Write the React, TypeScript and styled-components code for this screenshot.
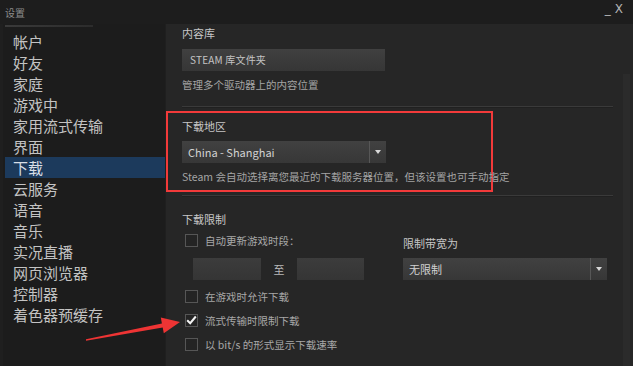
import React, { FC } from 'react';
import styled, { createGlobalStyle } from 'styled-components';

const GlobalStyle = createGlobalStyle`
  html, body {
    margin: 0;
    padding: 0;
    background: #1f1f1f;
  }

  body {
    font-family: "Noto Sans CJK SC", "Liberation Sans", sans-serif;
  }
`;

const Window = styled.div`
  position: relative;
  width: 633px;
  height: 366px;
  background-color: #1f1f1f;
  display: flex;
  flex-direction: column;
  overflow: hidden;
`;

const TitleBar = styled.div`
  height: 24px;
  flex-shrink: 0;
  display: flex;
  align-items: center;
  justify-content: space-between;
  padding: 0 10px 0 5px;
  background-color: #1d1d1d;
`;

const Title = styled.span`
  font-size: 10px;
  color: #8c8c8c;
`;

const WindowControls = styled.div`
  display: flex;
  align-items: flex-end;
  gap: 4px;
  color: #b4b4b4;
  font-family: "DejaVu Sans", sans-serif;
  font-size: 12px;
  line-height: 12px;
  margin-top: -6px;
`;

const Body = styled.div`
  flex: 1;
  display: flex;
  padding-left: 3px;
  min-height: 0;
`;

const Sidebar = styled.nav`
  position: relative;
  width: 162px;
  flex-shrink: 0;
  background-color: #1c1c1c;
  padding-top: 7px;
  margin-right: 1px;

  &::before {
    content: '';
    position: absolute;
    top: 1px;
    left: 2px;
    width: 88px;
    height: 2px;
    background: linear-gradient(to right, #3a3a3a, #2c2c2c);
  }
`;

interface NavItemProps {
  selected?: boolean;
}

const NavItem = styled.div<NavItemProps>`
  height: 21px;
  line-height: 21px;
  padding-left: 8px;
  margin-left: 2px;
  font-size: 15px;
  color: ${ props => props.selected ? '#d8dee6' : '#c3c3c3' };
  background-color: ${ props => props.selected ? '#1c3a5c' : 'transparent' };
  white-space: nowrap;
`;

const Content = styled.main`
  flex: 1;
  display: flex;
  background-color: #262626;
  min-width: 0;
`;

const Panel = styled.div`
  flex: 1;
  min-width: 0;
`;

const ScrollTrack = styled.div`
  width: 7px;
  flex-shrink: 0;
  margin: 50px 3px 0 0;
  background-color: #2b2b2b;
`;

interface SectionProps {
  highlighted?: boolean;
}

const Section = styled.section<SectionProps>`
  padding: ${ props => props.highlighted ? '4px 14px 5px 14px' : '0 16px' };
  width: ${ props => props.highlighted ? '327px' : 'auto' };
  box-sizing: border-box;
  border: ${ props => props.highlighted ? '2px solid #f23a3a' : 'none' };
`;

const Label = styled.div`
  font-size: 11px;
  line-height: 18px;
  color: #c6c6c6;
`;

const Help = styled.div`
  margin-top: 6px;
  font-size: 10.5px;
  line-height: 16px;
  color: #a4a4a4;
  white-space: nowrap;
`;

const LibraryButton = styled.div`
  margin-top: 7px;
  width: 203px;
  height: 22px;
  line-height: 22px;
  padding-left: 8px;
  box-sizing: border-box;
  font-size: 10px;
  letter-spacing: 0.2px;
  color: #c4c4c4;
  background: linear-gradient(to bottom, #404040, #363636);
`;

const Divider = styled.hr`
  margin: 13px 10px 0 16px;
  border: none;
  height: 1px;
  background-color: #3a3a3a;
  box-shadow: 0 1px 0 #202020;
`;

interface SelectProps {
  width: number;
}

const Select = styled.div<SelectProps>`
  margin-top: 6px;
  width: ${ props => props.width }px;
  height: 22px;
  display: flex;
  align-items: center;
  background: linear-gradient(to bottom, #414141, #373737);
  color: #d2d2d2;
  font-size: 11px;
`;

const SelectValue = styled.span`
  flex: 1;
  padding-left: 6px;
`;

const SelectArrow = styled.span`
  width: 17px;
  height: 100%;
  display: flex;
  align-items: center;
  justify-content: center;
  border-left: 1px solid #575757;
  box-sizing: border-box;

  &::after {
    content: '';
    border-left: 3.5px solid transparent;
    border-right: 3.5px solid transparent;
    border-top: 4px solid #d8d8d8;
  }
`;

const LimitSection = styled.section`
  padding: 14px 16px 0 16px;
`;

const LimitColumns = styled.div`
  display: flex;
  margin-top: 4px;
`;

const LeftColumn = styled.div`
  width: 226px;
`;

const RightColumn = styled.div`
  padding-top: 2px;
`;

const CheckRow = styled.label`
  display: flex;
  align-items: center;
  height: 16px;
  gap: 7px;
  padding-left: 3px;
  font-size: 10.5px;
  color: #a8a8a8;
  white-space: nowrap;

  & + & {
    margin-top: 8px;
  }
`;

const Box = styled.span`
  width: 13px;
  height: 13px;
  box-sizing: border-box;
  border: 1px solid #565656;
  background-color: #242424;
  display: flex;
  align-items: center;
  justify-content: center;
`;

const TimeRow = styled.div`
  display: flex;
  align-items: center;
  margin: 10px 0 0 11px;
`;

interface TimeInputProps {
  width: number;
}

const TimeInput = styled.div<TimeInputProps>`
  width: ${ props => props.width }px;
  height: 22px;
  background: linear-gradient(to bottom, #3c3c3c, #353535);
`;

const To = styled.span`
  width: 36px;
  text-align: center;
  font-size: 11px;
  color: #b8b8b8;
`;

const Checks = styled.div`
  margin-top: 8px;
`;

const Annotation = styled.svg`
  position: absolute;
  left: 0;
  top: 0;
  pointer-events: none;
`;

interface CheckboxProps {
  checked?: boolean;
  label: string;
}

const Checkbox: FC<CheckboxProps> = ({ checked, label }) => (
  <CheckRow>
    <Box>
      { checked && (
        <svg width='11' height='10' viewBox='0 0 11 10'>
          <path d='M1.2 5.2 L4.2 8.2 L9.8 1.5' fill='none' stroke='#f2f2f2' strokeWidth='2' />
        </svg>
      ) }
    </Box>
    { label }
  </CheckRow>
);

const navItems = [
  '帐户', '好友', '家庭', '游戏中', '家用流式传输', '界面', '下载',
  '云服务', '语音', '音乐', '实况直播', '网页浏览器', '控制器', '着色器预缓存',
];

const App: FC = () => (
  <>
    <GlobalStyle />
    <Window>
      <TitleBar>
        <Title>设置</Title>
        <WindowControls>
          <span>_</span>
          <span>X</span>
        </WindowControls>
      </TitleBar>
      <Body>
        <Sidebar>
          { navItems.map(item => (
            <NavItem key={ item } selected={ item === '下载' }>{ item }</NavItem>
          )) }
        </Sidebar>
        <Content>
          <Panel>
            <Section>
              <Label>内容库</Label>
              <LibraryButton>STEAM 库文件夹</LibraryButton>
              <Help>管理多个驱动器上的内容位置</Help>
            </Section>
            <Divider />
            <Section highlighted style={ { marginTop: 4 } }>
              <Label>下载地区</Label>
              <Select width={ 204 }>
                <SelectValue>China - Shanghai</SelectValue>
                <SelectArrow />
              </Select>
              <Help>Steam 会自动选择离您最近的下载服务器位置，但该设置也可手动指定</Help>
            </Section>
            <Divider style={ { marginTop: 3 } } />
            <LimitSection>
              <Label>下载限制</Label>
              <LimitColumns>
                <LeftColumn>
                  <Checkbox label='自动更新游戏时段：' />
                  <TimeRow>
                    <TimeInput width={ 68 } />
                    <To>至</To>
                    <TimeInput width={ 67 } />
                  </TimeRow>
                </LeftColumn>
                <RightColumn>
                  <Label>限制带宽为</Label>
                  <Select width={ 204 }>
                    <SelectValue>无限制</SelectValue>
                    <SelectArrow />
                  </Select>
                </RightColumn>
              </LimitColumns>
              <Checks>
                <Checkbox label='在游戏时允许下载' />
                <Checkbox checked label='流式传输时限制下载' />
                <Checkbox label='以 bit/s 的形式显示下载速率' />
              </Checks>
            </LimitSection>
          </Panel>
          <ScrollTrack />
        </Content>
      </Body>
      <Annotation width='633' height='366' viewBox='0 0 633 366'>
        <polygon
          points='86,339.3 161.9,323.4 160.8,317.5 180,322 163.8,333.3 162.7,327.4 86,340.7'
          fill='#ee3434'
        />
      </Annotation>
    </Window>
  </>
);

export default App;
